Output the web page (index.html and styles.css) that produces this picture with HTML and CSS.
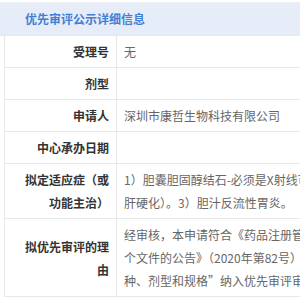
FILE: index.html
```html
<!DOCTYPE html>
<html lang="zh">
<head>
<meta charset="utf-8">
<title>优先审评公示详细信息</title>
<link rel="stylesheet" href="styles.css">
</head>
<body>
<div class="panel">
  <div class="panel-head">优先审评公示详细信息</div>
  <table class="detail">
    <tr>
      <th>受理号</th>
      <td>无</td>
    </tr>
    <tr>
      <th>剂型</th>
      <td></td>
    </tr>
    <tr>
      <th>申请人</th>
      <td>深圳市康哲生物科技有限公司</td>
    </tr>
    <tr>
      <th>中心承办日期</th>
      <td></td>
    </tr>
    <tr>
      <th>拟定适应症（或功能主治）</th>
      <td><span class="line">1）胆囊胆固醇结石-必须是X射线可透过的结石，并且胆囊收缩功能须正常；2）原发性胆汁性胆管炎（原发性胆汁性</span><span class="line">肝硬化）。3）胆汁反流性胃炎。</span></td>
    </tr>
    <tr>
      <th>拟优先审评的理由</th>
      <td><span class="line">经审核，本申请符合《药品注册管理办法》和《国家药监局关于发布〈突破性治疗药物审评工作程序（试行）〉等三</span><span class="line">个文件的公告》（2020年第82号）的相关规定，并经公示无异议，拟将以上药品的上述品</span><span class="line">种、剂型和规格”纳入优先审评审批程序。</span></td>
    </tr>
  </table>
</div>
</body>
</html>
```
FILE: styles.css
```css
html, body {
  margin: 0;
  padding: 0;
  background: #fff;
  overflow: hidden;
}
body {
  font-family: "Noto Sans CJK SC", "Noto Sans", sans-serif;
  font-size: 12px;
}
.panel {
  padding-top: 2px;
  width: 760px;
}
.panel-head {
  height: 32px;
  line-height: 32px;
  background: #e6edf8;
  border-top: 1px solid #eef0f3;
  border-bottom: 1px solid #e4e8ee;
  padding-left: 25px;
  color: #3f80d6;
  font-weight: bold;
  font-size: 12px;
}
.detail {
  margin-left: 4px;
  border-collapse: collapse;
  width: 740px;
  border-left: 1px solid #e8e8e8;
}
.detail tr {
  border-bottom: 1px solid #e8e8e8;
}
.detail th {
  width: 92px;
  padding: 4px 7px 4px 12px;
  text-align: right;
  font-weight: bold;
  color: #333;
  line-height: 23px;
  vertical-align: middle;
  border-right: 1px solid #e8e8e8;
}
.detail td {
  padding: 4px 7px;
  color: #666;
  line-height: 23px;
  vertical-align: middle;
  white-space: nowrap;
}
.line {
  display: block;
}
```
